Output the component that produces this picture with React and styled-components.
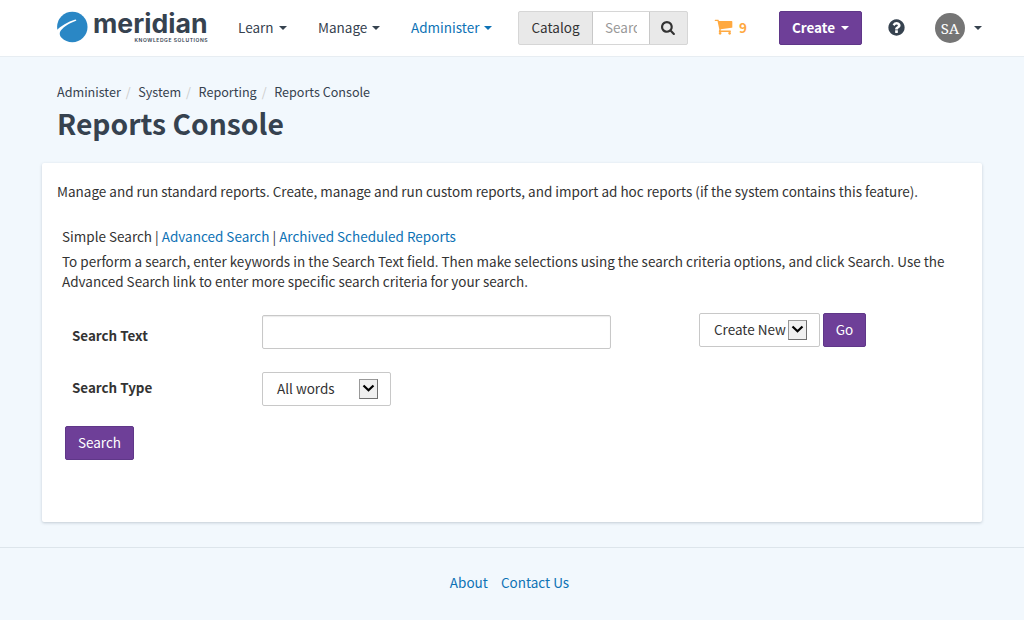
import React from "react";
import styled, { createGlobalStyle } from "styled-components";

const Global = createGlobalStyle`
  * { box-sizing: border-box; }
  body {
    margin: 0;
    background: #f2f8fd;
    color: #333;
    font-family: "Noto Sans CJK SC", "Open Sans", sans-serif;
    font-size: 13.5px;
    line-height: 20px;
  }
  input, button { font: inherit; color: inherit; }
`;

const Page = styled.div`
  width: 1024px;
  height: 620px;
  overflow: hidden;
`;

const Header = styled.header`
  display: flex;
  align-items: flex-start;
  height: 57px;
  padding: 11px 0 0 56px;
  background: #fff;
  border-bottom: 1px solid #e7edf2;
  white-space: nowrap;
`;

const Logo = styled.svg`
  display: block;
  flex: none;
  width: 182px;
  height: 36px;
  overflow: visible;
`;

const Wordmark = styled.text`
  font: 700 26px Inter, sans-serif;
  fill: #36424f;
`;

const Tagline = styled.text`
  font: 600 5px Inter, sans-serif;
  fill: #36424f;
`;

const NavItem = styled.a`
  display: flex;
  align-items: center;
  flex: none;
  width: ${(p) => p.$width}px;
  height: 31px;
  color: ${(p) => (p.$active ? "#0d72b5" : "#36424f")};
`;

const Caret = styled.span`
  width: 0;
  height: 0;
  margin-left: ${(p) => p.$gap ?? 5}px;
  border: 4px solid transparent;
  border-top-color: currentColor;
  border-bottom: 0;
  transform: translateY(${(p) => p.$drop ?? 1}px);
`;

const SearchGroup = styled.div`
  display: flex;
  width: 170px;
  height: 34px;
  border: 1px solid #d6d6d6;
  border-radius: 2px;
  background: #e9e9e9;
  overflow: hidden;
`;

const Scope = styled.span`
  display: flex;
  align-items: center;
  width: 73px;
  height: 29px;
  padding-left: 12.5px;
`;

const Query = styled.input`
  width: 58px;
  height: 34px;
  margin-top: -1px;
  padding: 0 12px 3px;
  border: 1px solid #c8c8c8;
  border-radius: 0;
  background: #fff;
  outline: 0;
  &::placeholder { color: #999; opacity: 1; }
`;

const Lens = styled.span`
  display: flex;
  flex: 1;
  align-items: center;
  justify-content: center;
  height: 31px;
`;

const Cart = styled.a`
  display: flex;
  align-items: center;
  width: 91px;
  height: 31px;
  padding-left: 26px;
  gap: 6px;
  color: #ffa940;
  font-weight: 700;
`;

const Button = styled.button`
  display: flex;
  flex: none;
  align-items: center;
  justify-content: center;
  width: ${(p) => p.$width}px;
  height: 34px;
  padding: 0 0 ${(p) => p.$lift ?? 2}px;
  border: 1px solid #5f3788;
  border-radius: 2px;
  background: #6e3f98;
  color: #fff;
  font-weight: ${(p) => (p.$bold ? 700 : 400)};
`;

const Help = styled.span`
  display: flex;
  align-items: center;
  width: 73px;
  height: 32px;
  padding-left: 25px;
  color: #36424f;
`;

const Avatar = styled.span`
  display: flex;
  align-items: center;
  justify-content: center;
  width: 30px;
  height: 30px;
  margin-top: 2px;
  border-radius: 50%;
  background: #757575;
  color: #fff;
  font: 15px/28px "Noto Serif", "Liberation Serif", serif;
  padding-bottom: 1px;
`;

const UserMenu = styled.div`
  display: flex;
  align-items: center;
  color: #36424f;
`;

const Heading = styled.section`
  height: 106px;
  padding: 26px 0 0 57px;
  color: #36424f;
`;

const Crumbs = styled.nav`
  display: flex;
  font-size: 12.6px;
  line-height: 18px;
`;

const Crumb = styled.span`
  & + &::before {
    content: "/";
    padding: 0 7.5px 0 5px;
    color: #ccc;
  }
`;

const Title = styled.h1`
  margin: 4px 0 0;
  font-size: 28.25px;
  line-height: 36px;
  font-weight: 700;
`;

const Card = styled.main`
  width: 940px;
  height: 359px;
  margin-left: 42px;
  padding: 18px 15px 0;
  border-radius: 2px;
  background: #fff;
  box-shadow: 0 1px 3px rgba(50, 70, 90, 0.25);
`;

const Intro = styled.p`
  margin: 0;
  white-space: nowrap;
`;

const Block = styled.div`
  padding: 25px 0 0 5px;
`;

const Line = styled.p`
  margin: ${(p) => p.$top || 0}px 0 0;
  white-space: nowrap;
`;

const Link = styled.a`
  color: #0d72b5;
`;

const Row = styled.div`
  display: flex;
  align-items: flex-start;
  margin-top: ${(p) => p.$top}px;
  padding-left: 10px;
`;

const Label = styled.label`
  width: 190px;
  padding-top: ${(p) => p.$drop}px;
  font-size: 13.4px;
  font-weight: 700;
`;

const TextInput = styled.input`
  width: 349px;
  height: 34px;
  margin: 2px 88px 0 0;
  border: 1px solid #c8c8c8;
  border-radius: 2px;
  background: #fff;
  box-shadow: inset 0 1px 1px rgba(0, 0, 0, 0.08);
`;

const Select = styled.div`
  display: flex;
  justify-content: space-between;
  width: ${(p) => p.$width}px;
  height: 34px;
  margin-right: 3px;
  padding: 5px 12px 0 14px;
  border: 1px solid #c8c8c8;
  border-radius: 2px;
  background: #fff;
  white-space: nowrap;
`;

const Drop = styled.span`
  display: flex;
  justify-content: center;
  width: 19px;
  height: 20px;
  margin-top: 1px;
  padding-top: 4px;
  border: 1px solid #707070;
  border-top-color: #999;
  border-left-color: #999;
  background: #f0f0f0;
`;

const SearchAction = styled.div`
  margin: 20px 0 0 3px;
`;

const Footer = styled.footer`
  display: flex;
  justify-content: center;
  gap: 13px;
  height: 73px;
  margin-top: 25px;
  padding: 24px 5px 0 0;
  border-top: 1px solid #dde5eb;
`;

const icons = {
  search:
    "M1152 832q0-185-131.5-316.5t-316.5-131.5-316.5 131.5-131.5 316.5 131.5 316.5 316.5 131.5 316.5-131.5 131.5-316.5zm512 832q0 52-38 90t-90 38q-54 0-90-38l-343-342q-179 124-399 124-143 0-273.5-55.5t-225-150-150-225-55.5-273.5 55.5-273.5 150-225 225-150 273.5-55.5 273.5 55.5 225 150 150 225 55.5 273.5q0 220-124 399l343 343q37 37 37 90z",
  cart:
    "M704 1536q0 52-38 90t-90 38-90-38-38-90 38-90 90-38 90 38 38 90zm896 0q0 52-38 90t-90 38-90-38-38-90 38-90 90-38 90 38 38 90zm128-1088v512q0 24-16.5 42.5t-40.5 21.5l-1044 122q13 60 13 70 0 16-24 64h920q26 0 45 19t19 45-19 45-45 19h-1024q-26 0-45-19t-19-45q0-11 8-31.5t16-36 21.5-40 15.5-29.5l-177-823h-204q-26 0-45-19t-19-45 19-45 45-19h256q16 0 28.5 6.5t19.5 15.5 13 24.5 8 26 5.5 29.5 4.5 26h1201q26 0 45 19t19 45z",
  help:
    "M1024 1376v-192q0-14-9-23t-23-9h-192q-14 0-23 9t-9 23v192q0 14 9 23t23 9h192q14 0 23-9t9-23zm256-672q0-88-55.5-163t-138.5-116-170-41q-243 0-371 213-15 24 8 42l132 100q7 6 19 6 16 0 25-12 53-68 86-92 34-24 86-24 48 0 85.5 26t37.5 59q0 38-20 61t-68 45q-63 28-115.5 86.5t-52.5 125.5v36q0 14 9 23t23 9h192q14 0 23-9t9-23q0-19 21.5-49.5t54.5-49.5q32-18 49-28.5t46-35 44.5-48 28-60.5 12.5-81zm384 192q0 209-103 385.5t-279.5 279.5-385.5 103-385.5-103-279.5-279.5-103-385.5 103-385.5 279.5-279.5 385.5-103 385.5 103 279.5 279.5 103 385.5z",
};

const Icon = ({ name, size }) => (
  <svg width={size} height={size} viewBox="0 0 1792 1792" fill="currentColor">
    <path d={icons[name]} />
  </svg>
);

const Chevron = () => (
  <svg width="13" height="9" viewBox="0 0 13 9" fill="none" stroke="#000" strokeWidth="2.2">
    <path d="M1.5 1.5L6.5 6.3L11.5 1.5" />
  </svg>
);

export default function App() {
  return (
    <Page>
      <Global />
      <Header>
        <Logo viewBox="0 0 182 36">
          <circle cx="16.3" cy="16" r="15.2" fill="#2a87c5" />
          <path
            d="M0 19.8C5 14.8 11.5 10.6 19.4 8.4A0.8 0.8 0 0 1 20 9.8C13.5 12 8 15.8 5 19.3C3.8 20.8 3.3 22.4 4.2 25L2.5 26L0 24Z"
            fill="#fff"
          />
          <Wordmark x="37" y="22" textLength="114.5" lengthAdjust="spacingAndGlyphs">
            meridian
          </Wordmark>
          <Tagline x="78.5" y="31" textLength="73" lengthAdjust="spacing">
            KNOWLEDGE SOLUTIONS
          </Tagline>
        </Logo>
        <NavItem $width={80}>Learn<Caret /></NavItem>
        <NavItem $width={93}>Manage<Caret /></NavItem>
        <NavItem $width={107} $active>Administer<Caret /></NavItem>
        <SearchGroup>
          <Scope>Catalog</Scope>
          <Query placeholder="Search" />
          <Lens><Icon name="search" size={15} /></Lens>
        </SearchGroup>
        <Cart><Icon name="cart" size={19} />9</Cart>
        <Button $width={83} $lift={3} $bold>Create<Caret $gap={6} $drop={1} /></Button>
        <Help><Icon name="help" size={19} /></Help>
        <UserMenu>
          <Avatar>SA</Avatar>
          <Caret $gap={9} />
        </UserMenu>
      </Header>
      <Heading>
        <Crumbs>
          <Crumb>Administer</Crumb>
          <Crumb>System</Crumb>
          <Crumb>Reporting</Crumb>
          <Crumb>Reports Console</Crumb>
        </Crumbs>
        <Title>Reports Console</Title>
      </Heading>
      <Card>
        <Intro>
          Manage and run standard reports. Create, manage and run custom reports, and import ad hoc
          reports (if the system contains this feature).
        </Intro>
        <Block>
          <Line>
            Simple Search | <Link>Advanced Search</Link> | <Link>Archived Scheduled Reports</Link>
          </Line>
          <Line $top={5}>
            To perform a search, enter keywords in the Search Text field. Then make selections using
            the search criteria options, and click Search. Use the
            <br />
            Advanced Search link to enter more specific search criteria for your search.
          </Line>
          <Row $top={22}>
            <Label $drop={12}>Search Text</Label>
            <TextInput />
            <Select $width={121}>Create New<Drop><Chevron /></Drop></Select>
            <Button $width={43}>Go</Button>
          </Row>
          <Row $top={23}>
            <Label $drop={5}>Search Type</Label>
            <Select $width={129}>All words<Drop><Chevron /></Drop></Select>
          </Row>
          <SearchAction>
            <Button $width={69} $lift={3}>Search</Button>
          </SearchAction>
        </Block>
      </Card>
      <Footer>
        <Link>About</Link>
        <Link>Contact Us</Link>
      </Footer>
    </Page>
  );
}
